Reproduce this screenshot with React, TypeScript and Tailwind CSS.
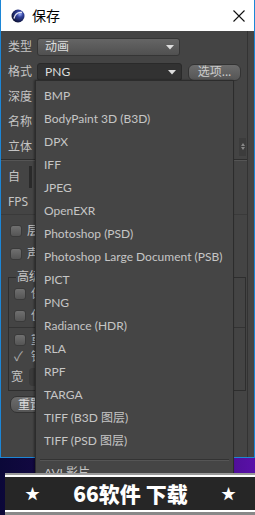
import React from "react";

const items = [
  "BMP",
  "BodyPaint 3D (B3D)",
  "DPX",
  "IFF",
  "JPEG",
  "OpenEXR",
  "Photoshop (PSD)",
  "Photoshop Large Document (PSB)",
  "PICT",
  "PNG",
  "Radiance (HDR)",
  "RLA",
  "RPF",
  "TARGA",
  "TIFF (B3D 图层)",
  "TIFF (PSD 图层)",
];

const font = { fontFamily: '"Noto Sans", "Noto Sans CJK SC", sans-serif' };
const menuFont = { fontFamily: 'Lato, "Noto Sans CJK SC", sans-serif' };

function Check({ checked }: { checked?: boolean }) {
  return (
    <div className="w-[12px] h-[12px] rounded-[3px] bg-gradient-to-b from-[#707070] to-[#555] border border-[#3a3a3a] flex items-center justify-center text-[11px] leading-none text-[#bbb]">
      {checked ? "✓" : null}
    </div>
  );
}

function Label({ children }: { children: React.ReactNode }) {
  return <span className="text-[12px] text-[#c4c4c4] leading-none">{children}</span>;
}

export default function App() {
  return (
    <div
      className="relative w-[255px] h-[515px] overflow-hidden bg-gradient-to-r from-[#0b0838] via-[#24095a] to-[#5a10a8]"
      style={font}
    >
      {/* Window */}
      <div className="h-[458px] flex flex-col border-x border-b border-[#1c86d6] bg-[#444]">
        {/* Title bar */}
        <div className="h-[31px] bg-white flex items-center pl-[10px] pr-[9px] shrink-0">
          <svg width="14" height="14" viewBox="0 0 14 14">
            <defs>
              <radialGradient id="g" cx="0.65" cy="0.35" r="0.7">
                <stop offset="0" stopColor="#9fb3ff" />
                <stop offset="0.35" stopColor="#2f3f9a" />
                <stop offset="1" stopColor="#0a0f30" />
              </radialGradient>
            </defs>
            <circle cx="7" cy="7" r="6.5" fill="url(#g)" />
            <path d="M3 9.5 C4 5 7 3 11 3.5" stroke="#ffffff" strokeWidth="1.4" fill="none" opacity="0.85" />
          </svg>
          <span className="ml-[7px] text-[14px] text-black" style={{ fontFamily: '"Noto Sans CJK SC", sans-serif' }}>
            保存
          </span>
          <div className="flex-1" />
          <svg width="12" height="12" viewBox="0 0 12 12">
            <path d="M0.5 0.5 L11.5 11.5 M11.5 0.5 L0.5 11.5" stroke="#111" strokeWidth="1.1" />
          </svg>
        </div>

        {/* Content */}
        <div className="flex-1 flex flex-col pl-[7px] mr-[6px] border-r border-[#333] relative">
          <div className="h-[7px]" />
          <div className="h-[18px] flex items-center gap-[5px]">
            <Label>类型</Label>
            <div className="w-[143px] h-[18px] rounded-[3px] border border-[#353535] bg-gradient-to-b from-[#656565] to-[#505050] flex items-center pl-[7px] pr-[5px]">
              <span className="text-[12px] text-[#ddd] flex-1 leading-none">动画</span>
              <svg width="8" height="5" viewBox="0 0 8 5"><path d="M0 0 L8 0 L4 4.5 Z" fill="#ddd" /></svg>
            </div>
          </div>
          <div className="h-[7px]" />
          <div className="h-[18px] flex items-center gap-[5px]">
            <Label>格式</Label>
            <div className="w-[145px] h-[18px] rounded-[3px] border border-[#2a2a2a] bg-[#323232] flex items-center pl-[7px] pr-[5px]">
              <span className="text-[12px] text-[#ddd] flex-1 leading-none" style={menuFont}>PNG</span>
              <svg width="8" height="5" viewBox="0 0 8 5"><path d="M0 0 L8 0 L4 4.5 Z" fill="#ddd" /></svg>
            </div>
            <div className="ml-[1px] w-[53px] h-[17px] rounded-[6px] border border-[#333] bg-gradient-to-b from-[#6c6c6c] to-[#555] flex items-center justify-center">
              <span className="text-[12px] text-[#ccc] leading-none">选项...</span>
            </div>
          </div>
          <div className="h-[3px]" />
          <div className="h-[25px] flex items-center"><Label>深度</Label></div>
          <div className="h-[25px] flex items-center"><Label>名称</Label></div>
          <div className="h-[25px] flex items-center justify-between pr-[1px]">
            <Label>立体</Label>
            <div className="w-[7px] h-[18px] bg-[#3c3c3c] flex flex-col items-center justify-center gap-[1px]">
              <div className="w-0 h-0 border-x-[2px] border-x-transparent border-b-[3px] border-b-[#888]" />
              <div className="w-0 h-0 border-x-[2px] border-x-transparent border-t-[3px] border-t-[#888]" />
            </div>
          </div>
          <div className="h-[1px] bg-[#2e2e2e] -ml-[7px]" />
          <div className="h-[1px] bg-[#555] -ml-[7px]" />
          <div className="h-[3px]" />
          <div className="h-[25px] flex items-center gap-[9px]">
            <Label>自</Label>
            <div className="w-[3px] h-[22px] bg-[#2a2a2a]" />
          </div>
          <div className="h-[25px] flex items-center"><Label>FPS</Label></div>
          <div className="h-[1px] bg-[#3a3a3a] -ml-[7px]" />
          <div className="h-[4px]" />
          <div className="h-[23px] flex items-center gap-[5px] pl-[2px]"><Check /><Label>层</Label></div>
          <div className="h-[23px] flex items-center gap-[5px] pl-[2px]"><Check /><Label>声</Label></div>
          <div className="h-[4px]" />
          {/* Group box */}
          <div className="mr-[1px] border border-[#2e2e2e] h-[114px] flex flex-col pl-[5px] pt-[3px] mt-[8px]">
            <div className="-mt-[11px] ml-[2px] bg-[#444] w-fit px-[1px] h-[14px] flex items-center">
              <Label>高级</Label>
            </div>
            <div className="h-[22px] flex items-center gap-[5px]"><Check /><Label>保</Label></div>
            <div className="h-[22px] flex items-center gap-[5px]"><Check /><Label>使</Label></div>
            <div className="h-[1px] bg-[#333] -ml-[5px]" />
            <div className="h-[4px]" />
            <div className="h-[18px] flex items-center gap-[5px]"><Check /><Label>重</Label></div>
            <div className="h-[16px] flex items-center gap-[5px]"><span className="text-[13px] text-[#aaa] w-[12px] leading-none">✓</span><Label>锁</Label></div>
            <div className="h-[26px] flex items-center gap-[6px] -ml-[3px]">
              <Label>宽</Label>
              <div className="w-[10px] h-[18px] rounded-l-[4px] bg-[#3a3a3a]" />
            </div>
          </div>
          <div className="h-[5px]" />
          <div className="ml-[2px] w-[40px] h-[17px] rounded-[7px] border border-[#333] bg-gradient-to-b from-[#6c6c6c] to-[#555] flex items-center pl-[7px]">
            <span className="text-[12px] text-[#ddd] leading-none">重置</span>
          </div>
        </div>
      </div>

      {/* Dropdown menu */}
      <div
        className="absolute left-[35px] top-[80px] w-[199px] h-[420px] bg-[#454545] border border-[#2c2c2c] shadow-[-1px_0_2px_rgba(0,0,0,0.4)] pt-[3px]"
        style={menuFont}
      >
        {items.map((it) => (
          <div key={it} className="h-[23px] flex items-center pl-[8px] text-[12px] text-[#c6c6c6] whitespace-nowrap">
            {it}
          </div>
        ))}
        <div className="h-[7px]" />
        <div className="mx-[4px] h-[1px] bg-[#333]" />
        <div className="mx-[4px] h-[1px] bg-[#555]" />
        <div className="h-[23px] flex items-center pl-[8px] text-[12px] text-[#c6c6c6] whitespace-nowrap">AVI 影片</div>
      </div>

      {/* Watermark banner */}
      <div className="absolute left-[5px] right-0 top-[473px] h-[42px] bg-[#777] flex flex-col">
        <div className="h-[2px] bg-[#999]" />
        <div className="h-[2px] bg-white" />
        <div className="h-[33px] bg-[#262626] flex items-center justify-between pl-[20px] pr-[19px]">
          <span className="text-white text-[15px] leading-none">★</span>
          <span
            className="text-white text-[21px] font-black leading-none tracking-[0px]"
            style={{ fontFamily: '"Noto Sans CJK SC", serif' }}
          >
            66软件 下载
          </span>
          <span className="text-white text-[15px] leading-none">★</span>
        </div>
        <div className="h-[2px] bg-white" />
        <div className="flex-1 bg-[#888]" />
      </div>
    </div>
  );
}
